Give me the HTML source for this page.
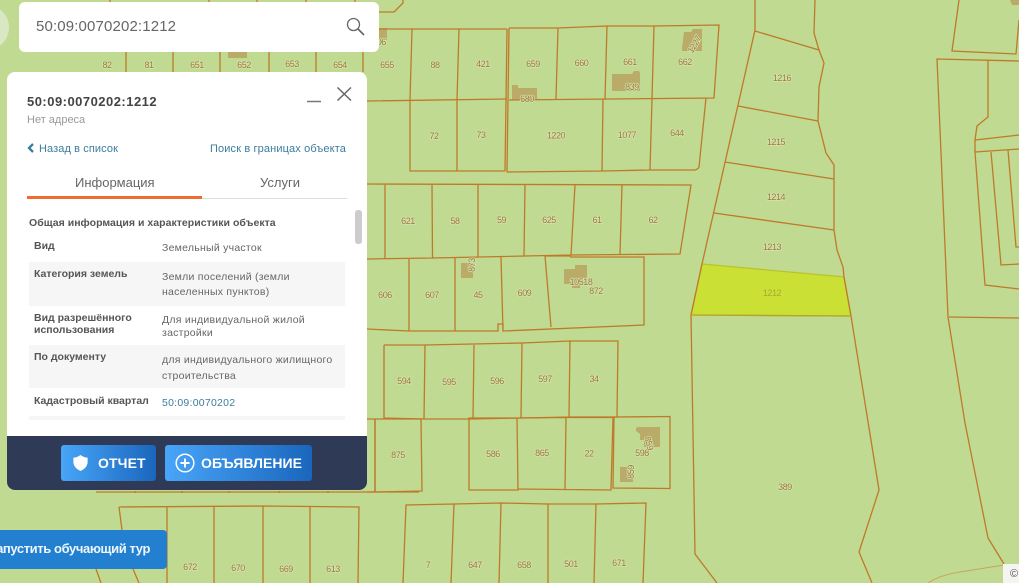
<!DOCTYPE html>
<html><head><meta charset="utf-8">
<style>
html,body{margin:0;padding:0;width:1019px;height:583px;overflow:hidden;background:#c1da91;font-family:"Liberation Sans","DejaVu Sans",sans-serif}
#m{position:absolute;left:0;top:0}
#m text{font:9px "Liberation Sans",sans-serif;letter-spacing:-.45px;fill:#9c7a3a;text-anchor:middle;paint-order:stroke;stroke:#d3e3ae;stroke-width:1.5px}
#m path{fill:none;stroke:#bd7a2a;stroke-width:1.3}
#m path.b{fill:#bbab68;stroke:none}
.a{position:absolute;white-space:nowrap}
.l{font-size:10.5px;font-weight:bold;color:#555;left:34px;line-height:12px}
.v{font-size:10.5px;color:#666;left:162px;letter-spacing:.25px;line-height:12px}
.g{position:absolute;left:29px;width:316px;background:#f6f6f6}
.btn{position:absolute;top:445px;height:36px;border-radius:3px;background:linear-gradient(90deg,#48a5f8,#1a66bd);color:#fff;font-weight:bold;font-size:14px;line-height:36px}
</style></head><body>
<svg id="m" width="1019" height="583" viewBox="0 0 1019 583">
<path d="M702 264L844 277L851 316L691 315Z" style="fill:#cbe035;stroke:#b9c42c"/>
<path class="b" d="M228 50h8l2-3h9v11h-19z"/>
<path class="b" d="M376 28h11v12h-11z"/>
<path class="b" d="M512 85h6v3h19v12h-25z"/>
<path class="b" d="M612 74h20l2-3h5l1 2v18h-28z"/>
<path class="b" d="M682 48l2-16h7l2-3h9v22h-20z"/>
<path class="b" d="M461 263h12v15h-12z"/>
<path class="b" d="M564 269h11v-4h12v20h-7v3h-8v-4h-8z"/>
<path class="b" d="M636 428l2-1h22v20h-16v-7h-4v-6l-4-3z"/>
<path class="b" d="M620 467h9v5h4v10h-13z"/>
<path class="b" d="M1010 0h9v5h-7z"/>

<path d="M110 0v2M209 0v2M257 0v2M306 0v2M355 0v2"/>
<path d="M126 52v20M173 52v20M220 52v20M269 52v20M316 52v20M363 52v20"/>
<path d="M370 12h24l9-9v-3"/>
<path d="M375 29H507M412 29L410 100M459 29L457 100M507 29L505 171M367 101L507 99M410 100V171H505"/>
<path d="M457 100L457 171"/>
<path d="M509 28L558 28L607 26L654 26L719 25L714 98L509 100M558 28L556 99M607 26L605 99M654 26L652 98"/>
<path d="M509 28L507 172L602 171L650 170L695 170Q698 169 699 167L706 98M603 99L602 171M652 99L650 170"/>
<path d="M367 184L691 185L680 254L571 255L432 258L367 259M385 184V259M432 184L432.500 258M478 184V258M525 184L524 256M575 185L571 255M622 185L620 254"/>
<path d="M367 329L409 331H498V324H503V331L644 325L644 257H570M409 259V331M455 258V331M501 257L503 331M545 256L551 327M545 256L571 256"/>
<path d="M384 345H425L522 343L570 341H618L617 417L569 417L521 418L473 419L424 419L384 418V345M425 345L424 419M474 345L473 419M522 343L521 418M570 341L569 417"/>
<path d="M367 419H421L422 491L375 492H367M375 419V492"/>
<path d="M469 418H517L518 490H469Z"/>
<path d="M518 418L566 417.500H613L611 490L518 489M566 417.500L565 489"/>
<path d="M614 417L670 416.500V488.500L613 488Z"/>
<path d="M403 583L406 505L454 504L501 503L548 504L596 504L646 503L643 583M454 504L451 583M501 503L499 583M548 504V583M596 504L594 583"/>
<path d="M96 492H375M135 491V493M182 491V493M229 491V493M279 491V493M328 491V493M375 419V492L419 492"/>
<path d="M119 507L263 506L359 507L358 583M167 507V583M214 507V583M263 506V583M310 507V583M119 507L122 530M96 569L101 583M133 569L139 583"/>

<path d="M755 0V30L702 264L691 315L695 554L717 583"/>
<path d="M815 0L814 33L819 50L824 63L819 87L818 121L826 153L834 165V230L837 250L843 267L844 277L851 316L879 490L859 552L872 583"/>
<path d="M755 31L819 50M738 106L818 121M725 162L834 179M714 213L834 230"/>
<path d="M691 315L851 316" style="stroke:#b5a32c"/>
<path d="M959 0L952 51L1016 54L1019 20"/>
<path d="M1019 61L937 59L948 317L965 423L988 538L1004 564"/>
<path d="M1004 565L960 572Q940 575 928 583" style="stroke:#c9a35f;stroke-width:.9"/>
<path d="M949 317L1019 318"/>
<path d="M988 60V117L977 126L975 140V152L985 285L1019 289M975 140L1019 135M975 152L1019 149M991 152L1001 265L1019 264M1008 150L1016 247H1019"/>

<text x="107" y="68">82</text><text x="149" y="68">81</text><text x="197" y="68">651</text><text x="244" y="68">652</text><text x="292" y="67">653</text><text x="340" y="68">654</text><text x="379" y="45">606</text><text x="387" y="68">655</text><text x="435" y="68">88</text><text x="483" y="67">421</text><text x="533" y="67">659</text><text x="581.500" y="66">660</text><text x="630" y="65">661</text><text x="685" y="65">662</text>
<text x="527" y="102">680</text><text x="632" y="90">839</text>
<text x="434" y="139">72</text><text x="481" y="138">73</text><text x="556" y="138.500">1220</text><text x="627" y="138">1077</text><text x="677" y="136">644</text>
<text x="408" y="224">621</text><text x="455" y="224">58</text><text x="501.500" y="223">59</text><text x="549" y="223">625</text><text x="597" y="223">61</text><text x="653" y="223">62</text>
<text x="385" y="298">606</text><text x="432" y="298">607</text><text x="478" y="298">45</text><text x="524.500" y="296">609</text><text x="596" y="294">872</text><text x="581" y="285" font-style="italic">10518</text>
<text transform="translate(475,265) rotate(-90)" y="0">873</text>
<text x="404" y="384">594</text><text x="449" y="385">595</text><text x="497" y="384">596</text><text x="545" y="382">597</text><text x="594" y="382">34</text>
<text x="398" y="458">875</text><text x="493" y="457">586</text><text x="542" y="456">865</text><text x="589" y="456.500">22</text><text x="642" y="456">598</text>
<text transform="translate(646,444) rotate(75)">859</text><text transform="translate(634,472) rotate(-90)">859</text>
<text x="428" y="568">7</text><text x="475" y="568">647</text><text x="524" y="568">658</text><text x="571" y="567">501</text><text x="619" y="566">671</text>
<text x="190" y="570">672</text><text x="238" y="571">670</text><text x="286" y="572">669</text><text x="333" y="572">613</text>
<text x="782" y="81">1216</text><text x="776" y="145">1215</text><text x="776" y="200">1214</text><text x="772" y="250">1213</text>
<text x="772" y="296" style="fill:#a5ad30;stroke:none">1212</text><text x="785" y="490">389</text>
<text transform="translate(697,46) rotate(-60)">1227</text>
</svg>

<div class="a" style="left:-36px;top:5px;width:45px;height:45px;border-radius:50%;background:#d9e8c2"></div>

<div class="a" style="left:19px;top:2px;width:360px;height:50px;background:#fff;border-radius:6px"></div>
<div class="a" style="left:36px;top:18px;font-size:15px;line-height:18px;color:#666;letter-spacing:.14px">50:09:0070202:1212</div>
<svg class="a" style="left:346px;top:17px" width="19" height="19" viewBox="0 0 19 19"><circle cx="7.500" cy="7.500" r="6" fill="none" stroke="#666" stroke-width="1.300"/><path d="M12 12L18 18" stroke="#666" stroke-width="1.700" fill="none"/></svg>

<div class="a" style="left:7px;top:72px;width:360px;height:418px;background:#fff;border-radius:8px;overflow:hidden">
<div class="a" style="left:0;top:364px;width:360px;height:54px;background:#2e3a56"></div>
</div>

<div class="a" style="left:27px;top:94px;font-size:13px;font-weight:bold;color:#444;line-height:15px;letter-spacing:.48px">50:09:0070202:1212</div>
<div class="a" style="left:27px;top:114px;font-size:11px;color:#999;line-height:13px">Нет адреса</div>
<svg class="a" style="left:307px;top:86px" width="48" height="20" viewBox="0 0 48 20"><path d="M0 15.500H14" stroke="#777" stroke-width="1.500"/><path d="M30.500 1.500L44 14.500M44 1.500L30.500 14.500" stroke="#666" stroke-width="1.500" fill="none"/></svg>

<svg class="a" style="left:27px;top:143px" width="8" height="10" viewBox="0 0 8 10"><path d="M6 1L2 5L6 9" stroke="#3b7d9f" stroke-width="2.300" fill="none"/></svg>
<div class="a" style="left:39px;top:143px;font-size:11px;color:#3b7d9f;line-height:13px;letter-spacing:.1px">Назад в список</div>
<div class="a" style="left:210px;top:143px;font-size:11px;color:#3b7d9f;line-height:13px;letter-spacing:.13px">Поиск в границах объекта</div>

<div class="a" style="left:75px;top:175px;font-size:13px;color:#666;line-height:15px">Информация</div>
<div class="a" style="left:260px;top:175px;font-size:13px;color:#666;line-height:15px">Услуги</div>
<div class="a" style="left:27px;top:198px;width:320px;height:1px;background:#ddd"></div>
<div class="a" style="left:27px;top:196px;width:175px;height:3px;background:#ee6c30"></div>

<div class="a" style="left:29px;top:217px;font-size:10.500px;font-weight:bold;color:#555;line-height:12px;letter-spacing:.03px">Общая информация и характеристики объекта</div>
<div class="a" style="left:355px;top:210px;width:7px;height:34px;background:#ccc;border-radius:3px"></div>

<div class="g" style="top:262px;height:44px"></div>
<div class="g" style="top:345px;height:43px"></div>
<div class="g" style="top:416px;height:4px"></div>

<div class="a l" style="top:240px">Вид</div>
<div class="a v" style="top:242px">Земельный участок</div>
<div class="a l" style="top:268px">Категория земель</div>
<div class="a v" style="top:271px">Земли поселений (земли</div>
<div class="a v" style="top:286px">населенных пунктов)</div>
<div class="a l" style="top:312px">Вид разрешённого</div>
<div class="a l" style="top:324px">использования</div>
<div class="a v" style="top:314px">Для индивидуальной жилой</div>
<div class="a v" style="top:327px">застройки</div>
<div class="a l" style="top:351px">По документу</div>
<div class="a v" style="top:354px">для индивидуального жилищного</div>
<div class="a v" style="top:370px">строительства</div>
<div class="a l" style="top:395px">Кадастровый квартал</div>
<div class="a v" style="top:397px;color:#3b7d9f">50:09:0070202</div>

<div class="btn" style="left:61px;width:95px"><span class="a" style="left:37px;letter-spacing:.1px">ОТЧЕТ</span>
<svg class="a" style="left:12px;top:10px" width="15" height="16" viewBox="0 0 16 18"><path d="M8 0Q12 3 16 3V9Q15 15 8 18Q1 15 0 9V3Q4 3 8 0Z" fill="#fff"/></svg></div>
<div class="btn" style="left:165px;width:147px"><span class="a" style="left:36px;letter-spacing:.05px">ОБЪЯВЛЕНИЕ</span>
<svg class="a" style="left:10px;top:8px" width="20" height="20" viewBox="0 0 20 20"><circle cx="10" cy="10" r="8.800" fill="none" stroke="#fff" stroke-width="1.500"/><path d="M10 5.500V14.500M5.500 10H14.500" stroke="#fff" stroke-width="2" fill="none"/></svg></div>

<div class="a" style="left:0;top:530px;width:167px;height:39px;background:#2380d0;border-radius:0 4px 4px 0;overflow:hidden">
<div class="a" style="right:17px;top:11px;font-size:13px;font-weight:bold;color:#eef6fc;line-height:16px;letter-spacing:-.4px">Запустить обучающий тур</div></div>

<div class="a" style="left:1003px;top:564px;width:16px;height:19px;background:#f4f4f0;overflow:hidden"><span class="a" style="left:7px;top:4px;font-size:11px;color:#555">©</span></div>
</body></html>
